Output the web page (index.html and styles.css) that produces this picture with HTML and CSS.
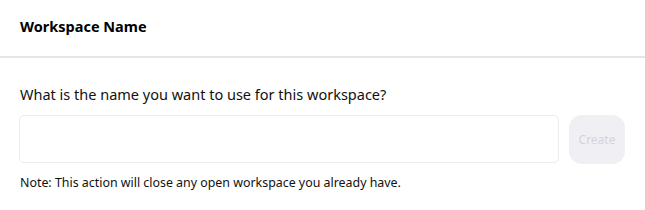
FILE: index.html
```html
<!DOCTYPE html>
<html lang="en">
<head>
    <meta charset="UTF-8">
    <meta name="viewport" content="width=device-width, initial-scale=1.0">
    <title>Workspace Name</title>
    <link rel="stylesheet" href="styles.css">
</head>
<body>

<header class="dialog-header">
    <h2>Workspace Name</h2>
</header>

<div class="dialog-body">
    <label class="question" for="workspace-name">What is the name you want to use for this workspace?</label>
    <div class="name-row">
        <input type="text" id="workspace-name">
        <button class="create-button" disabled>Create</button>
    </div>
    <p class="note">Note: This action will close any open workspace you already have.</p>
</div>

</body>
</html>
```

FILE: styles.css
```css
body {
    font-family: "Noto Sans", "Open Sans", sans-serif;
    margin: 0;
    padding: 0;
    background-color: #fff;
    color: #111;
}
.dialog-header {
    height: 58px;
    padding: 0 20px 5px;
    display: flex;
    align-items: center;
    border-bottom: 2px solid #e5e5e5;
    box-sizing: border-box;
}
.dialog-header h2 {
    margin: 0;
    font-size: 14.5px;
    font-weight: 700;
    color: #000;
}
.dialog-body {
    padding: 26px 20px 0 19px;
}
.question {
    display: block;
    padding-left: 1px;
    font-size: 14.5px;
    line-height: 20px;
    margin-bottom: 11px;
}
.name-row {
    display: flex;
    gap: 10px;
}
.name-row input {
    width: 540px;
    height: 48px;
    box-sizing: border-box;
    border: 1px solid #ececec;
    border-radius: 5px;
    padding: 0 12px;
    font-size: 14px;
}
.create-button {
    width: 56px;
    height: 49px;
    border: none;
    border-radius: 13px;
    background-color: #f0f0f4;
    color: #d3d3dc;
    font-family: inherit;
    font-size: 12px;
}
.note {
    margin: 11px 0 0;
    padding-left: 1px;
    font-size: 12.4px;
    line-height: 16px;
}
```
